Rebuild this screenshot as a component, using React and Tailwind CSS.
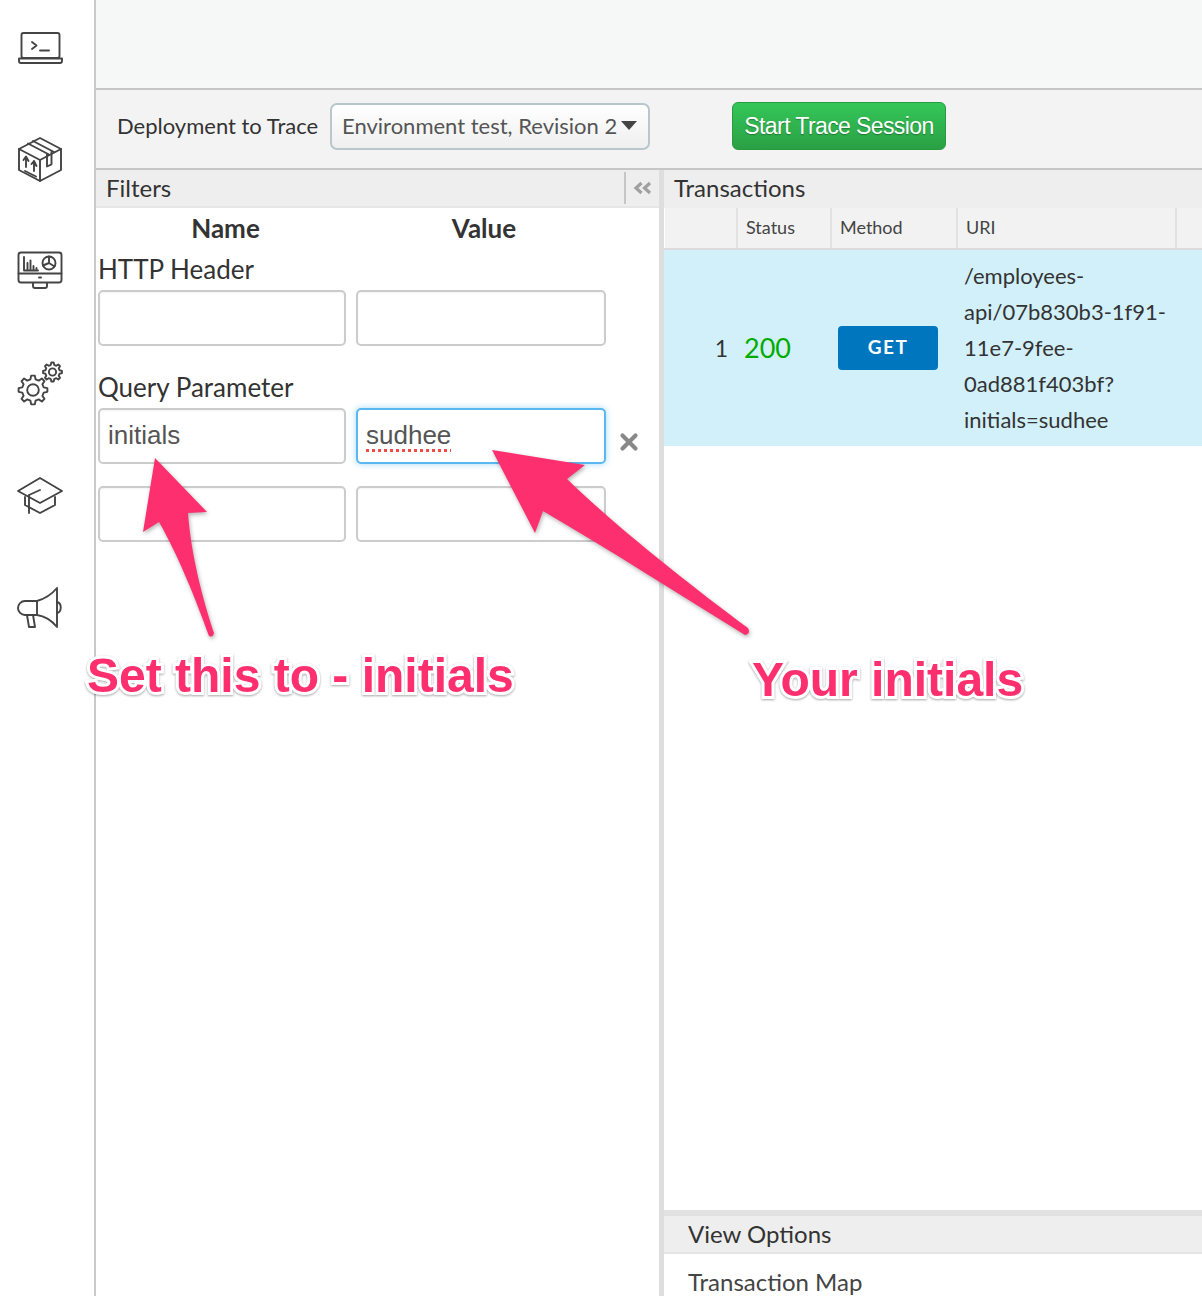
const ink = "#444";

function gearPath(cx, cy, ro, ri, teeth) {
  const pts = [];
  const step = (Math.PI * 2) / teeth;
  for (let i = 0; i < teeth; i++) {
    const a = i * step;
    [[-0.3, ri], [-0.16, ro], [0.16, ro], [0.3, ri]].forEach(([d, r]) => {
      const t = a + d * step * 1.0;
      pts.push(`${(cx + r * Math.cos(t)).toFixed(2)} ${(cy + r * Math.sin(t)).toFixed(2)}`);
    });
  }
  return "M" + pts.join("L") + "Z";
}

function Ico({ children }) {
  return (
    <div className="h-[112px] flex items-center justify-center">
      <svg width="48" height="48" viewBox="0 0 48 48" fill="none" stroke={ink} strokeWidth="1.9" strokeLinecap="round" strokeLinejoin="round">
        {children}
      </svg>
    </div>
  );
}

function Sidebar() {
  return (
    <div className="w-[96px] shrink-0 border-r-2 border-[#c9c9c9] bg-white pr-[14px]">
      <div className="mt-[-9px]">
        <Ico>
          <rect x="5.500" y="10" width="38" height="25" rx="2" />
          <path d="M3 35.500h43v2.500a2 2 0 0 1-2 2H5a2 2 0 0 1-2-2z" />
          <path d="M16 19l4.500 3.500L16 26M24 27.500h9" />
        </Ico>
        <Ico>
          <path d="M24 3L45 14V35L24 46L3 35V14z" />
          <path d="M3 14L24 25L45 14M24 25V46" />
          <path d="M12 8.500L33 19.500M17 6L38 17" />
          <path d="M31 19v12.500l4.500-2.200V17" />
          <path d="M9 36L20 41.500" />
          <path d="M10 32V22M7.500 25L10 21.500 12.500 26M18 36V26M15.500 29L18 26 20.500 31" />
        </Ico>
        <Ico>
          <rect x="2.500" y="5.500" width="43" height="30" rx="2.500" />
          <path d="M2.500 26.500h43" />
          <path d="M23 30.500h2" />
          <path d="M17 36V39a2 2 0 0 0 2 2h10a2 2 0 0 0 2-2v-3" />
          <path d="M8 10v13.500h14M11.500 23v-7M14.500 23v-9.500M17.500 23v-4M20.500 23v-2" />
          <circle cx="33" cy="16" r="6.500" />
          <path d="M33 16V9.500M33 16l-6 2.500M33 16l5.500 3.500" />
        </Ico>
        <Ico>
          <path d={gearPath(17, 31, 14.5, 11, 8)} />
          <circle cx="17" cy="31" r="5.800" />
          <path d={gearPath(36.500, 13, 9.500, 7.300, 8)} />
          <circle cx="36.500" cy="13" r="3.600" />
        </Ico>
        <Ico>
          <path d="M24 7L46 20L24 32L2 20z" />
          <path d="M9 26V34L24 42L39 34V26" />
          <path d="M13 24V42M13 24L24 19" />
        </Ico>
        <Ico>
          <path d="M21 18H9a7 7 0 0 0 0 14h12z" />
          <path d="M21 18C28 16 36 11 41 5V44C36 38 28 33 21 32" />
          <path d="M41 19c5 1 5 10 0 11" />
          <path d="M11 32l2 12h6l-2-12" />
        </Ico>
      </div>
    </div>
  );
}

function Field({ w, focused, children }) {
  return (
    <div
      className={
        w +
        " h-[56px] rounded-[5px] border-2 px-[8px] pb-[2px] flex items-center font-['Liberation_Sans',Arial,sans-serif] text-[26px] text-[#555] bg-white " +
        (focused
          ? "border-[#5ab8f0] shadow-[0_0_6px_rgba(90,184,240,0.55)]"
          : "border-[#cccccc] shadow-[inset_0_1px_2px_rgba(0,0,0,0.05)]")
      }
    >
      {children}
    </div>
  );
}

function FilterRow({ a, b, focused, remove, className }) {
  return (
    <div className={"flex items-center gap-[10px] pl-[2px] " + (className || "")}>
      <Field w="w-[248px]">{a}</Field>
      <Field w="w-[250px]" focused={focused}>{b}</Field>
      {remove && (
        <svg className="ml-[3px] mt-[12px]" width="20" height="20" viewBox="0 0 20 20" stroke="#888" strokeWidth="4.200" strokeLinecap="round">
          <path d="M3.500 3.500L16.500 16.500M16.500 3.500L3.500 16.500" />
        </svg>
      )}
    </div>
  );
}

function Filters() {
  return (
    <div className="w-[563px] shrink-0 bg-white">
      <div className="h-[38px] bg-[#eeeeee] border-b-2 border-[#e6e6e6] flex items-center pl-[10px] pb-[1px] text-[24px] text-[#333]">
        <span className="flex-1">Filters</span>
        <div className="w-[35px] h-[32px] border-l-2 border-[#c6c6c6] flex items-center justify-center">
          <svg width="20" height="14" viewBox="0 0 20 14" fill="none" stroke="#a0a0a0" strokeWidth="3.200">
            <path d="M8.500 2L3 7l5.500 5M17 2l-5.500 5 5.500 5" />
          </svg>
        </div>
      </div>
      <div className="flex h-[41px] items-center text-[26px] font-bold text-[#333]">
        <div className="w-[259px] text-center">Name</div>
        <div className="w-[258px] text-center">Value</div>
      </div>
      <div className="h-[41px] pl-[2px] flex items-center text-[26px] text-[#333]">HTTP Header</div>
      <FilterRow />
      <div className="h-[62px] pl-[2px] pt-[20px] flex items-center text-[26px] text-[#333]">Query Parameter</div>
      <FilterRow
        a="initials"
        b={<span className="underline decoration-dotted decoration-[#f04b45] decoration-[3px] underline-offset-[5px]">sudhee</span>}
        focused
        remove
      />
      <FilterRow className="mt-[22px]" />
    </div>
  );
}

function Transactions() {
  const head = "h-[40px] flex items-center bg-[#f2f2f2] border-r-2 border-[#e2e2e2] pl-[8px] pb-[1px] text-[18px] text-[#444]";
  return (
    <div className="flex-1 min-w-0 flex flex-col bg-white">
      <div className="h-[38px] shrink-0 bg-[#eeeeee] flex items-center pl-[10px] pb-[3px] text-[24px] text-[#333]">Transactions</div>
      <div className="shrink-0 flex border-b-2 border-[#dcdcdc] pl-[1px]">
        <div className={head + " w-[73px]"} />
        <div className={head + " w-[94px]"}>Status</div>
        <div className={head + " w-[126px]"}>Method</div>
        <div className={head + " w-[219px]"}>URI</div>
        <div className="h-[40px] flex-1 bg-[#f2f2f2]" />
      </div>
      <div className="h-[196px] shrink-0 bg-[#d2f0fa] flex items-center text-[#333]">
        <div className="w-[64px] text-right text-[23px]">1</div>
        <div className="w-[110px] pl-[16px] text-[27px] text-[#00ac00]">200</div>
        <div className="w-[100px] h-[44px] rounded-[4px] bg-[#0076bf] text-white font-bold text-[19px] tracking-[1.500px] flex items-center justify-center pb-[1px]">GET</div>
        <div className="pl-[26px] text-[22px] leading-[36px]">
          <div>/employees-</div>
          <div>api/07b830b3-1f91-</div>
          <div>11e7-9fee-</div>
          <div>0ad881f403bf?</div>
          <div>initials=sudhee</div>
        </div>
      </div>
      <div className="flex-1" />
      <div className="shrink-0 h-[6px] bg-[#e2e2e2]" />
      <div className="shrink-0 h-[38px] bg-[#eeeeee] border-b-2 border-[#e4e4e4] pl-[24px] pb-[1px] flex items-center text-[24px] text-[#333]">View Options</div>
      <div className="shrink-0 h-[42px] pl-[24px] pt-[10px] text-[24px] text-[#444] leading-[36px]">Transaction Map</div>
    </div>
  );
}

function Notes() {
  const label =
    "absolute font-['Liberation_Sans',Arial,sans-serif] font-bold text-[#fe2f6e] text-[48px] leading-none whitespace-nowrap [-webkit-text-stroke:6px_white] [paint-order:stroke_fill] drop-shadow-[0_1px_1px_rgba(0,0,0,0.35)]";
  return (
    <>
      <svg className="absolute left-0 top-0 drop-shadow-[1px_2px_2px_rgba(0,0,0,0.3)]" width="1202" height="700" viewBox="0 0 1202 700">
        <path
          d="M155 458L207 512L188 513C191 555 203 600 214 633Q213 638 209 636C196 600 178 555 159 522L143 532z"
          fill="#fe2f6e"
        />
        <path
          d="M492 450L585 465L567 479C620 530 690 585 748 628Q751 634 745 635C680 595 610 550 543 511L535 533z"
          fill="#fe2f6e"
        />
      </svg>
      <div className={label + " left-[87px] top-[652px]"}>Set this to - initials</div>
      <div className={label + " left-[752px] top-[656px]"}>Your initials</div>
    </>
  );
}

export default function App() {
  return (
    <div className="relative w-[1202px] h-[1296px] overflow-hidden flex bg-white font-['Lato','Open_Sans',sans-serif] text-[#333]">
      <Sidebar />
      <div className="flex-1 min-w-0 flex flex-col">
        <div className="h-[90px] shrink-0 bg-[#f6f7f7] border-b-2 border-[#c6c6c6]" />
        <div className="h-[80px] shrink-0 bg-[#f3f3f3] border-b-2 border-[#c6c6c6] flex items-center pl-[21px] pb-[6px]">
          <div className="text-[22px] text-[#333] w-[213px] shrink-0 pb-[1px]">Deployment to Trace</div>
          <div className="w-[320px] h-[47px] rounded-[7px] border-2 border-[#b7c7cc] bg-gradient-to-b from-[#ffffff] to-[#efefef] flex items-center pl-[10px] pb-[1px] text-[22px] text-[#555] shrink-0">
            <span className="flex-1 whitespace-nowrap">Environment test, Revision 2</span>
            <svg className="mr-[11px]" width="16" height="9" viewBox="0 0 16 9"><path d="M0 0h16L8 9z" fill="#444" /></svg>
          </div>
          <div className="ml-[82px] w-[214px] h-[48px] rounded-[6px] border border-[#2a9a40] bg-gradient-to-b from-[#34c759] to-[#2aa044] flex items-center justify-center font-['Liberation_Sans',Arial,sans-serif] text-[23px] tracking-[-0.6px] text-white [text-shadow:0_1px_1px_rgba(0,0,0,0.3)] shrink-0">
            Start Trace Session
          </div>
        </div>
        <div className="flex-1 min-h-0 flex">
          <Filters />
          <div className="w-[5px] shrink-0 bg-[#dedede]" />
          <Transactions />
        </div>
      </div>
      <Notes />
    </div>
  );
}
